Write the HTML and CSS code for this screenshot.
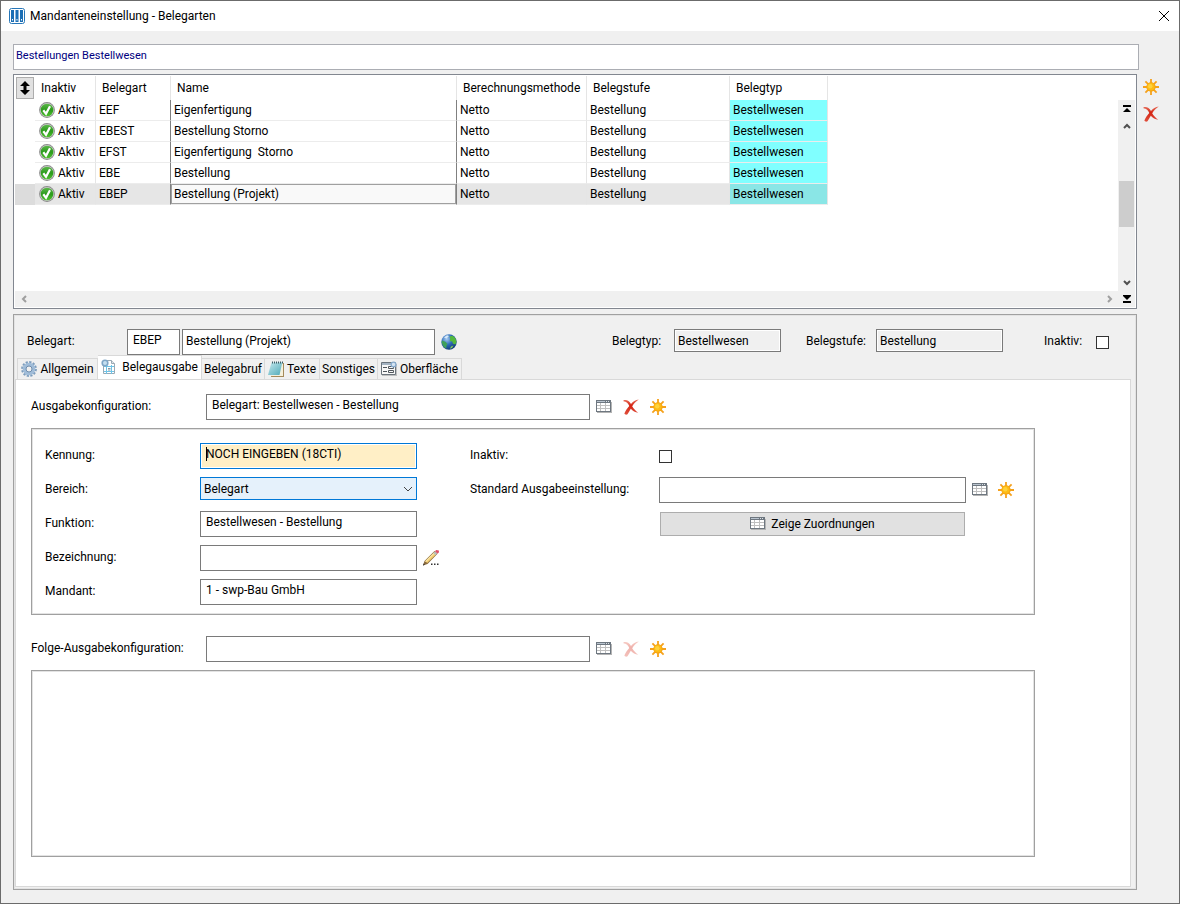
FILE: index.html
```
<!DOCTYPE html>
<html lang="de">

<head>
    <meta charset="UTF-8">
    <meta name="viewport" content="width=device-width, initial-scale=1.0">
    <title>Mandanteneinstellung - Belegarten</title>
    <link rel="stylesheet" href="styles.css">
</head>

<body>
    <svg class="symbols" aria-hidden="true">
        <defs>
            <linearGradient id="gradRed" x1="0" y1="0" x2="0" y2="1">
                <stop offset="0" stop-color="#e8705c" />
                <stop offset="0.4" stop-color="#d42413" />
                <stop offset="1" stop-color="#e0503e" />
            </linearGradient>
            <linearGradient id="gradGreen" x1="0" y1="0" x2="0" y2="1">
                <stop offset="0" stop-color="#5cb84a" />
                <stop offset="0.5" stop-color="#2b9a1c" />
                <stop offset="1" stop-color="#4fc02f" />
            </linearGradient>
            <radialGradient id="gradSea" cx="0.35" cy="0.3" r="0.75">
                <stop offset="0" stop-color="#a8cdf2" />
                <stop offset="0.5" stop-color="#2e6cb8" />
                <stop offset="1" stop-color="#123a78" />
            </radialGradient>
            <linearGradient id="gradPad" x1="0" y1="0" x2="1" y2="1">
                <stop offset="0" stop-color="#c4e9ee" />
                <stop offset="1" stop-color="#4fa9b8" />
            </linearGradient>
        </defs>
        <symbol id="sun" viewBox="0 0 16 16">
            <path fill="none" stroke="#f5a11c" stroke-width="1.800" d="M8 0v16M0 8h16M2.400 2.400l11.200 11.200M13.600 2.400L2.400 13.600" />
            <circle cx="8" cy="8" r="4.700" fill="#f5a410" />
            <circle cx="7.800" cy="7.800" r="3.800" fill="#fdbb16" />
            <circle cx="7.300" cy="7.200" r="2.200" fill="#ffd23c" />
        </symbol>
        <symbol id="delete" viewBox="0 0 16 16">
            <path fill="url(#gradRed)" d="M.5 1.200C3.500.2 6.200 1.700 8 5 10 2.600 12.400 1 15.800.600 13 2.600 10.900 4.500 9.200 7.200c1.300 2.300 3.200 4.400 6 6.500-3-.3-5.500-1.800-7.400-4-1.300 2.200-2.200 4-3.300 5.500-1 .8-2.700.4-3.100-.6 1.100-2.900 2.900-5.400 4.900-7.600C5.200 4.400 3.500 2.300.5 2.200z" />
        </symbol>
        <symbol id="check" viewBox="0 0 16 16">
            <circle cx="8" cy="8" r="7.900" fill="#8a8a8a" />
            <circle cx="8" cy="8" r="7" fill="#c9cdc9" />
            <circle cx="8" cy="8" r="6.300" fill="url(#gradGreen)" />
            <path d="M4.300 8.300l2.700 3.400L11 4.200" fill="none" stroke="#fff" stroke-width="2.200" />
        </symbol>
        <symbol id="table" viewBox="0 0 16 16">
            <path fill="#b4b4b4" d="M1 3h15v11H1z" />
            <path fill="#6e7780" d="M0 1h15v12H0z" />
            <path fill="#b9c4cf" d="M1 2h8v1H1z" />
            <path fill="#dde3e8" d="M10 2h1v1h-1zM12 2h1v1h-1z" />
            <path fill="#bfbfbf" d="M1 4h13v8H1z" />
            <path fill="#fff" d="M1 4h3v2H1zM5 4h4v2H5zM10 4h4v2h-4zM1 7h3v2H1zM5 7h4v2H5zM10 7h4v2h-4zM1 10h3v2H1zM5 10h4v2H5zM10 10h4v2h-4z" />
        </symbol>
        <symbol id="globe" viewBox="0 0 16 16">
            <circle cx="8" cy="8" r="7.700" fill="url(#gradSea)" />
            <path fill="#54b83c" d="M8.500 2.500l3-.7 2.800 2.300 1.200 3.400-1 3-2.500-.7-.8-2.300-2.500-.5.500-2.500z" />
            <path fill="#3fa05a" d="M1 6.500l3.500 1.200 2 2.200-1.200 2.300.2 2.400-2.700-1.700L.700 9z" />
            <path fill="#8bd05a" d="M10 12.500l2.500-1-1.500 2.600-2 .6z" />
            <path fill="#d6e8f8" d="M3 3.500L6 1.300 8 2 5.500 4.500z" />
        </symbol>
        <symbol id="gear" viewBox="0 0 16 16">
            <circle cx="8" cy="8" r="6.800" fill="none" stroke="#7d9dbd" stroke-width="2.200" stroke-dasharray="2.200 1.360" />
            <circle cx="8" cy="8" r="4.600" fill="none" stroke="#a0bcd8" stroke-width="3.400" />
            <circle cx="8" cy="8" r="3" fill="#f0f0f0" stroke="#6f8dad" stroke-width="1" />
        </symbol>
        <symbol id="report" viewBox="0 0 16 16">
            <path d="M2.500 1.500h8l3 3v10h-11z" fill="#fff" stroke="#9aa9b4" />
            <path d="M10.500 1.500v3h3" fill="#dfe6ea" stroke="#9aa9b4" />
            <path d="M3 7.500h10M3 12.500h10M5.500 6v9M10.500 6v9" stroke="#6fc3e6" fill="none" />
            <path d="M7 9.500h2.500M7 11h2.500" stroke="#8796a2" fill="none" />
            <circle cx="4" cy="4" r="2.800" fill="#c5dff0" stroke="#7fa6c6" stroke-width="1.600" />
        </symbol>
        <symbol id="notepad" viewBox="0 0 16 16">
            <path fill="#a58a5a" d="M5 2h11v14H3z" />
            <path fill="#f5f0dc" d="M5 2h10v13H3z" />
            <path fill="url(#gradPad)" d="M3.500 1.500h10.800L11.500 14H0z" />
            <path d="M4 1.500h11" stroke="#3f5d66" stroke-width="2" stroke-dasharray="1 1" />
        </symbol>
        <symbol id="form" viewBox="0 0 16 16">
            <path fill="#c0c0c0" d="M1 3h15v12H1z" />
            <path fill="#f8f8f8" stroke="#6b747c" d="M.5 1.500h14v12H.5z" />
            <path fill="#a4b3c2" d="M1 2h13v2H1z" />
            <path stroke="#50565c" fill="none" d="M2 6.500h4M2 10.500h4M7.500 5.500h5v2h-5zM7.500 9.500h5v2h-5z" />
            <circle cx="12.500" cy="3.500" r="2.400" fill="#d5e4f2" stroke="#86a9cc" stroke-width="1.300" />
        </symbol>
        <symbol id="pencil" viewBox="0 0 16 16">
            <path fill="#8a6a3c" d="M0 15.500L1.500 11 11.500 1l3 2.800L4.500 14z" />
            <path fill="#f4cf72" d="M2.200 11.300L11 2.500l2 1.900L4.200 13z" />
            <path fill="#fae8b0" d="M2.200 11.300L11 2.500l.8.7-8.900 8.900z" />
            <path fill="#b9c3c0" d="M10.300 3.100l1.700-1.700 2.100 2.100-1.600 1.700z" />
            <path fill="#e0526a" d="M12 1.200L13.200 0 15.800.600 16 2.300l-1.500 1.500z" />
            <path fill="#333" d="M0 15.500l.6-1.900 1.300 1.200zM8 13.500h1.500V15H8zM11 13.500h1.500V15H11zM14 13.500h1.500V15H14z" />
        </symbol>
    </svg>

    <header class="titlebar">
        <svg class="icon" viewBox="0 0 16 16">
            <rect x=".5" y=".5" width="15" height="15" rx="2" fill="#fff" stroke="#2676b8" />
            <path fill="#1c6fb5" d="M2 2h3v12H2zM6.500 2h3v12h-3zM11 2h3v12h-3z" />
            <path fill="#fff" d="M3 11h1v1.500H3zM7.500 11h1v1.500h-1zM12 11h1v1.500h-1z" />
        </svg>
        <h1>Mandanteneinstellung - Belegarten</h1>
        <button class="close" aria-label="Schließen">
            <svg viewBox="0 0 10 10" width="10" height="10">
                <path d="M0 0l10 10M10 0L0 10" stroke="#000" />
            </svg>
        </button>
    </header>

    <main>
        <input class="filter" type="text" value="Bestellungen Bestellwesen" aria-label="Filter">

        <div class="workspace">
            <section class="grid">
                <div class="grid-top">
                    <div class="grid-view">
                        <table>
                            <colgroup>
                                <col class="c-mark">
                                <col class="c-inaktiv">
                                <col class="c-art">
                                <col class="c-name">
                                <col class="c-methode">
                                <col class="c-stufe">
                                <col class="c-typ">
                            </colgroup>
                            <thead>
                                <tr>
                                    <th class="mark">
                                        <button class="sort" aria-label="Sortieren">
                                            <svg viewBox="0 0 10 14" width="10" height="14">
                                                <path d="M5 0l5 5H6.500v4H10l-5 5-5-5h3.500V5H0z" />
                                            </svg>
                                        </button>
                                    </th>
                                    <th>Inaktiv</th>
                                    <th>Belegart</th>
                                    <th>Name</th>
                                    <th>Berechnungsmethode</th>
                                    <th>Belegstufe</th>
                                    <th>Belegtyp</th>
                                </tr>
                            </thead>
                            <tbody>
                                <tr>
                                    <td class="mark"></td>
                                    <td class="state"><svg class="icon"><use href="#check" /></svg>Aktiv</td>
                                    <td class="art">EEF</td>
                                    <td class="name">Eigenfertigung</td>
                                    <td>Netto</td>
                                    <td>Bestellung</td>
                                    <td class="typ">Bestellwesen</td>
                                </tr>
                                <tr>
                                    <td class="mark"></td>
                                    <td class="state"><svg class="icon"><use href="#check" /></svg>Aktiv</td>
                                    <td class="art">EBEST</td>
                                    <td class="name">Bestellung Storno</td>
                                    <td>Netto</td>
                                    <td>Bestellung</td>
                                    <td class="typ">Bestellwesen</td>
                                </tr>
                                <tr>
                                    <td class="mark"></td>
                                    <td class="state"><svg class="icon"><use href="#check" /></svg>Aktiv</td>
                                    <td class="art">EFST</td>
                                    <td class="name">Eigenfertigung&nbsp; Storno</td>
                                    <td>Netto</td>
                                    <td>Bestellung</td>
                                    <td class="typ">Bestellwesen</td>
                                </tr>
                                <tr>
                                    <td class="mark"></td>
                                    <td class="state"><svg class="icon"><use href="#check" /></svg>Aktiv</td>
                                    <td class="art">EBE</td>
                                    <td class="name">Bestellung</td>
                                    <td>Netto</td>
                                    <td>Bestellung</td>
                                    <td class="typ">Bestellwesen</td>
                                </tr>
                                <tr class="selected">
                                    <td class="mark"></td>
                                    <td class="state"><svg class="icon"><use href="#check" /></svg>Aktiv</td>
                                    <td class="art">EBEP</td>
                                    <td class="name">Bestellung (Projekt)</td>
                                    <td>Netto</td>
                                    <td>Bestellung</td>
                                    <td class="typ">Bestellwesen</td>
                                </tr>
                            </tbody>
                        </table>
                    </div>
                    <div class="vscroll">
                        <button aria-label="Zum Anfang">
                            <svg viewBox="0 0 8 8" width="8" height="8"><path d="M0 0h8v2H0zM4 3l4 4H0z" /></svg>
                        </button>
                        <button aria-label="Nach oben">
                            <svg viewBox="0 0 8 6" width="8" height="6"><path class="arrow" d="M1 5l3-3 3 3" /></svg>
                        </button>
                        <div class="track"><div class="thumb"></div></div>
                        <button aria-label="Nach unten">
                            <svg viewBox="0 0 8 6" width="8" height="6"><path class="arrow" d="M1 1l3 3 3-3" /></svg>
                        </button>
                    </div>
                </div>
                <div class="hscroll">
                    <button aria-label="Nach links" disabled>
                        <svg viewBox="0 0 6 8" width="6" height="8"><path class="arrow" d="M5 1L2 4l3 3" /></svg>
                    </button>
                    <button aria-label="Nach rechts" disabled>
                        <svg viewBox="0 0 6 8" width="6" height="8"><path class="arrow" d="M1 1l3 3-3 3" /></svg>
                    </button>
                    <button aria-label="Zum Ende">
                        <svg viewBox="0 0 8 8" width="8" height="8"><path d="M0 6h8v2H0zM4 5L0 1V0h8v1z" /></svg>
                    </button>
                </div>
            </section>

            <aside class="toolbar">
                <button class="tool" aria-label="Neu"><svg class="icon"><use href="#sun" /></svg></button>
                <button class="tool" aria-label="Löschen"><svg class="icon"><use href="#delete" /></svg></button>
            </aside>
        </div>

        <section class="detail">
            <div class="head">
                <label class="l-art" for="belegart">Belegart:</label>
                <input class="f-art" type="text" id="belegart" value="EBEP">
                <input class="f-name" type="text" value="Bestellung (Projekt)" aria-label="Name">
                <button class="tool" aria-label="Übersetzung"><svg class="icon"><use href="#globe" /></svg></button>
                <label class="l-typ" for="belegtyp">Belegtyp:</label>
                <input class="readonly f-typ" type="text" id="belegtyp" value="Bestellwesen" readonly>
                <label class="l-stufe" for="belegstufe">Belegstufe:</label>
                <input class="readonly f-stufe" type="text" id="belegstufe" value="Bestellung" readonly>
                <label class="l-inaktiv" for="inaktiv">Inaktiv:</label>
                <input type="checkbox" id="inaktiv">
            </div>

            <div class="tabs" role="tablist">
                <button class="tab t-allgemein" role="tab"><svg class="icon"><use href="#gear" /></svg>Allgemein</button>
                <button class="tab t-ausgabe active" role="tab" aria-selected="true"><svg class="icon"><use href="#report" /></svg>Belegausgabe</button>
                <button class="tab t-abruf" role="tab">Belegabruf</button>
                <button class="tab t-texte" role="tab"><svg class="icon"><use href="#notepad" /></svg>Texte</button>
                <button class="tab t-sonstiges" role="tab">Sonstiges</button>
                <button class="tab t-oberflaeche" role="tab"><svg class="icon"><use href="#form" /></svg>Oberfläche</button>
            </div>

            <div class="page" role="tabpanel">
                <div class="config">
                    <label for="ausgabe">Ausgabekonfiguration:</label>
                    <input type="text" id="ausgabe" value="Belegart: Bestellwesen - Bestellung">
                    <div class="tools">
                        <button class="tool" aria-label="Auswählen"><svg class="icon"><use href="#table" /></svg></button>
                        <button class="tool" aria-label="Löschen"><svg class="icon"><use href="#delete" /></svg></button>
                        <button class="tool" aria-label="Neu"><svg class="icon"><use href="#sun" /></svg></button>
                    </div>
                </div>

                <div class="box form">
                    <div class="left">
                        <label for="kennung">Kennung:</label>
                        <input class="focused" type="text" id="kennung" value="NOCH EINGEBEN (18CTI)">
                        <label for="bereich">Bereich:</label>
                        <div class="select">
                            <select id="bereich">
                                <option>Belegart</option>
                            </select>
                            <svg viewBox="0 0 10 6" width="10" height="6"><path d="M1 1l4 4 4-4" fill="none" stroke="#444" /></svg>
                        </div>
                        <label for="funktion">Funktion:</label>
                        <input type="text" id="funktion" value="Bestellwesen - Bestellung">
                        <label for="bezeichnung">Bezeichnung:</label>
                        <input type="text" id="bezeichnung">
                        <button class="tool" aria-label="Bearbeiten"><svg class="icon"><use href="#pencil" /></svg></button>
                        <label for="mandant">Mandant:</label>
                        <input type="text" id="mandant" value="1 - swp-Bau GmbH">
                    </div>
                    <div class="right">
                        <label for="konfigInaktiv">Inaktiv:</label>
                        <input type="checkbox" id="konfigInaktiv">
                        <label for="standard">Standard Ausgabeeinstellung:</label>
                        <input type="text" id="standard">
                        <div class="tools">
                            <button class="tool" aria-label="Auswählen"><svg class="icon"><use href="#table" /></svg></button>
                            <button class="tool" aria-label="Neu"><svg class="icon"><use href="#sun" /></svg></button>
                        </div>
                        <button class="assign"><svg class="icon"><use href="#table" /></svg>Zeige Zuordnungen</button>
                    </div>
                </div>

                <div class="config follow">
                    <label for="folge">Folge-Ausgabekonfiguration:</label>
                    <input type="text" id="folge">
                    <div class="tools">
                        <button class="tool" aria-label="Auswählen"><svg class="icon"><use href="#table" /></svg></button>
                        <button class="tool" aria-label="Löschen" disabled><svg class="icon"><use href="#delete" /></svg></button>
                        <button class="tool" aria-label="Neu"><svg class="icon"><use href="#sun" /></svg></button>
                    </div>
                </div>

                <div class="box empty"></div>
            </div>
        </section>
    </main>
</body>

</html>
```
FILE: styles.css
```
* {
    box-sizing: border-box;
}

body {
    margin: 0;
    min-height: 100vh;
    display: flex;
    flex-direction: column;
    border: 1px solid #6b6b6b;
    background-color: #f0f0f0;
    color: #000;
    font-family: Roboto, "Noto Sans", sans-serif;
    font-size: 12px;
    line-height: 16px;
}

button,
input,
select {
    font: inherit;
    color: inherit;
    margin: 0;
    border-radius: 0;
}

button {
    display: flex;
    align-items: center;
    justify-content: center;
    padding: 0;
    border: none;
    background: none;
}

.symbols {
    position: absolute;
    width: 0;
    height: 0;
}

.icon {
    width: 16px;
    height: 16px;
    flex: none;
}

/* Titelleiste */
.titlebar {
    display: flex;
    align-items: center;
    height: 30px;
    padding: 0 10px 0 8px;
    background-color: #fff;
}

.titlebar h1 {
    flex: 1;
    margin: 0 0 0 5px;
    font-size: 12px;
    font-weight: normal;
}

.close {
    height: 28px;
}

main {
    flex: 1;
    display: flex;
    flex-direction: column;
    padding: 13px 0 13px 12px;
}

/* Eingabefelder */
input[type="text"] {
    height: 26px;
    min-width: 0;
    padding: 0 5px 4px;
    border: 1px solid #7a7a7a;
    background-color: #fff;
    outline: none;
}

input[type="checkbox"] {
    appearance: none;
    width: 13px;
    height: 13px;
    border: 1px solid #333;
    background-color: #fff;
}

input[type="text"].filter {
    margin-right: 40px;
    padding: 0 2px 4px;
    border-color: #abadb3;
    color: #000080;
    font-size: 11px;
}

input[type="text"].readonly {
    height: 23px;
    padding: 0 3px;
    background-color: #f0f0f0;
    box-shadow: inset 0 0 0 1px #fff;
}

/* blaue Umrandung und Schreibmarke */
input[type="text"].focused {
    border-color: #0078d7;
    background: linear-gradient(#000, #000) 5px 3px / 1px 14px no-repeat #ffefc6;
    box-shadow: inset 0 0 0 1px #fff;
}

.tool {
    width: 16px;
    height: 16px;
    flex: none;
}

.tool:disabled {
    opacity: 0.35;
}

/* Tabelle */
.workspace {
    display: flex;
    margin-top: 4px;
}

.grid {
    flex: 1;
    min-width: 0;
    padding: 1px;
    border: 1px solid #828790;
    background-color: #fff;
}

.grid-top {
    display: flex;
    min-height: 215px;
}

.grid-view {
    flex: 1;
    min-width: 0;
    overflow: hidden;
}

table {
    width: 813px;
    table-layout: fixed;
    border-collapse: separate;
    border-spacing: 0;
}

.c-mark {
    width: 20px;
}

.c-inaktiv {
    width: 61px;
}

.c-art {
    width: 75px;
}

.c-name {
    width: 286px;
}

.c-methode {
    width: 130px;
}

.c-stufe {
    width: 143px;
}

.c-typ {
    width: 98px;
}

th,
td {
    border-right: 1px solid #e5e5e5;
    text-align: left;
    font-weight: normal;
    white-space: nowrap;
}

th {
    height: 24px;
    padding: 0 0 0 6px;
}

td {
    height: 21px;
    padding: 0 3px;
    border-bottom: 1px solid #ececec;
}

th.mark,
td.mark {
    padding: 0;
    border: none;
}

td.state {
    padding-left: 4px;
}

td.state .icon {
    margin-right: 3px;
    vertical-align: middle;
}

td.art,
td.name {
    border-right-color: #808080;
}

td.typ {
    background-color: #80ffff;
}

.selected td {
    background-color: #e6e6e6;
}

.selected td.mark {
    background-color: #dcdcdc;
}

.selected td.name {
    background-color: #f9f9f9;
    box-shadow: inset 0 0 0 1px #a0a0a0;
}

.selected td.typ {
    background-color: #8ae6e6;
}

.sort {
    width: 18px;
    height: 22px;
    margin-left: 1px;
    border: 1px solid #adadad;
    background-color: #e1e1e1;
}

/* Bildlaufleisten */
.arrow {
    fill: none;
    stroke: #505050;
    stroke-width: 2;
}

.vscroll {
    width: 17px;
    margin-top: 24px;
    display: flex;
    flex-direction: column;
    background-color: #f0f0f0;
}

.vscroll button {
    width: 17px;
    height: 17px;
}

.track {
    flex: 1;
    padding: 47px 1px 0;
}

.thumb {
    height: 46px;
    background-color: #cdcdcd;
}

.hscroll {
    display: flex;
    height: 16px;
    background-color: #f0f0f0;
}

.hscroll button {
    width: 17px;
    height: 16px;
}

.hscroll button:nth-child(2) {
    margin-left: auto;
}

.hscroll button:disabled {
    opacity: 0.5;
}

.toolbar {
    width: 42px;
    padding: 5px 0 0 6px;
    display: flex;
    flex-direction: column;
    gap: 11px;
}

/* Detailbereich */
.detail {
    flex: 1;
    display: flex;
    flex-direction: column;
    margin: 5px 42px 0 0;
    padding: 14px 5px 2px 0;
    border: 1px solid #a0a0a0;
    box-shadow: inset 0 0 0 1px #e3e3e3;
}

.head {
    display: flex;
    align-items: center;
    height: 26px;
    padding-left: 13px;
}

.head label {
    padding-bottom: 2px;
}

.head .readonly {
    align-self: flex-start;
}

.l-art {
    width: 100px;
}

.f-art {
    width: 53px;
    margin-right: 2px;
}

input[type="text"].f-name {
    width: 253px;
    margin-right: 6px;
    padding: 0 3px 2px;
}

.l-typ {
    width: 62px;
    margin-left: 155px;
}

.f-typ {
    width: 107px;
}

.l-stufe {
    width: 70px;
    margin-left: 25px;
}

.f-stufe {
    width: 127px;
}

.l-inaktiv {
    width: 52px;
    margin-left: 41px;
}

/* Reiter */
.tabs {
    display: flex;
    align-items: flex-end;
    height: 25px;
    margin-bottom: -1px;
    padding-left: 3px;
}

.tab {
    height: 22px;
    gap: 3px;
    border: 1px solid #d9d9d9;
    border-left: none;
    white-space: nowrap;
}

.tab.active {
    height: 25px;
    padding-bottom: 3px;
    gap: 5px;
    border-bottom: none;
    background-color: #fff;
}

.t-allgemein {
    width: 81px;
    border-left: 1px solid #d9d9d9;
}

.t-ausgabe {
    width: 104px;
}

.t-abruf {
    width: 63px;
}

.t-texte {
    width: 55px;
}

.t-sonstiges {
    width: 58px;
}

.t-oberflaeche {
    width: 84px;
}

.page {
    flex: 1;
    display: flex;
    flex-direction: column;
    margin-left: 1px;
    padding: 14px 95px 29px 15px;
    border: 1px solid #d9d9d9;
    background-color: #fff;
}

.config {
    display: flex;
    align-items: center;
    height: 26px;
}

.config label {
    width: 175px;
    padding-bottom: 2px;
}

.config input[type="text"] {
    width: 384px;
}

.follow {
    margin-top: 21px;
}

.tools {
    display: flex;
    gap: 10px;
    padding-left: 6px;
}

.config .tools {
    gap: 11px;
}

.box {
    margin-top: 8px;
    border: 1px solid #a0a0a0;
    box-shadow: inset 0 0 0 1px #e3e3e3;
}

.form {
    display: flex;
    padding: 14px 13px 9px;
}

.left,
.right {
    display: grid;
    grid-auto-rows: 26px;
    row-gap: 8px;
    align-items: center;
}

.left {
    width: 425px;
    grid-template-columns: 155px 217px 22px;
}

.right {
    grid-template-columns: 189px 307px auto;
}

.form label {
    grid-column: 1;
    padding-bottom: 2px;
}

.left .tool {
    margin-left: 6px;
}

.select {
    position: relative;
    align-self: start;
}

.select select {
    display: block;
    appearance: none;
    width: 100%;
    height: 23px;
    padding: 0 3px;
    border: 1px solid #0078d7;
    background-color: #e5f1fb;
}

.select svg {
    position: absolute;
    right: 4px;
    top: 9px;
    pointer-events: none;
}

.assign {
    grid-column: 2;
    height: 24px;
    margin: 0 1px;
    gap: 5px;
    border: 1px solid #adadad;
    background-color: #e1e1e1;
}

.empty {
    flex: 1;
    min-height: 100px;
}
```
